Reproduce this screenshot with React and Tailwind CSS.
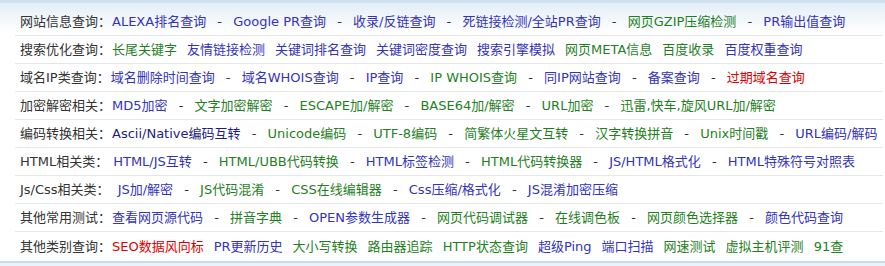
import React from "react";

const B = "text-[#3333bb]";
const G = "text-[#1f7f1f]";
const R = "text-[#dd0000]";
const N = "text-[#1c1c86]";

const rows = [
  {
    label: "网站信息查询：",
    dash: true,
    items: [
      ["ALEXA排名查询", B],
      ["Google PR查询", B],
      ["收录/反链查询", B],
      ["死链接检测/全站PR查询", B],
      ["网页GZIP压缩检测", G],
      ["PR输出值查询", B],
    ],
  },
  {
    label: "搜索优化查询：",
    dash: false,
    items: [
      ["长尾关键字", G],
      ["友情链接检测", B],
      ["关键词排名查询", B],
      ["关键词密度查询", B],
      ["搜索引擎模拟", B],
      ["网页META信息", G],
      ["百度收录", G],
      ["百度权重查询", B],
    ],
  },
  {
    label: "域名IP类查询：",
    dash: true,
    items: [
      ["域名删除时间查询", B],
      ["域名WHOIS查询", B],
      ["IP查询", B],
      ["IP WHOIS查询", G],
      ["同IP网站查询", B],
      ["备案查询", B],
      ["过期域名查询", R],
    ],
  },
  {
    label: "加密解密相关：",
    dash: true,
    items: [
      ["MD5加密", B],
      ["文字加密解密", G],
      ["ESCAPE加/解密", G],
      ["BASE64加/解密", G],
      ["URL加密", G],
      ["迅雷,快车,旋风URL加/解密", G],
    ],
  },
  {
    label: "编码转换相关：",
    dash: true,
    items: [
      ["Ascii/Native编码互转", N],
      ["Unicode编码", G],
      ["UTF-8编码", G],
      ["简繁体火星文互转", G],
      ["汉字转换拼音", G],
      ["Unix时间戳", G],
      ["URL编码/解码", B],
    ],
  },
  {
    label: "HTML相关类：",
    dash: true,
    gap: "mr-[5px]",
    items: [
      ["HTML/JS互转", B],
      ["HTML/UBB代码转换", G],
      ["HTML标签检测", B],
      ["HTML代码转换器", G],
      ["JS/HTML格式化", B],
      ["HTML特殊符号对照表", B],
    ],
  },
  {
    label: "Js/Css相关类：",
    dash: true,
    gap: "mr-[8px]",
    items: [
      ["JS加/解密", B],
      ["JS代码混淆", G],
      ["CSS在线编辑器", G],
      ["Css压缩/格式化", B],
      ["JS混淆加密压缩", B],
    ],
  },
  {
    label: "其他常用测试：",
    dash: true,
    items: [
      ["查看网页源代码", B],
      ["拼音字典", G],
      ["OPEN参数生成器", B],
      ["网页代码调试器", G],
      ["在线调色板", G],
      ["网页颜色选择器", G],
      ["颜色代码查询", B],
    ],
  },
  {
    label: "其他类别查询：",
    dash: false,
    last: true,
    items: [
      ["SEO数据风向标", R],
      ["PR更新历史", B],
      ["大小写转换", G],
      ["路由器追踪", G],
      ["HTTP状态查询", G],
      ["超级Ping", B],
      ["端口扫描", B],
      ["网速测试", G],
      ["虚拟主机评测", G],
      ["91查", G],
    ],
  },
];

function Row({ row }) {
  return (
    <div
      className={
        "flex h-[28px] items-center whitespace-nowrap pl-[5px] " +
        (row.last ? "" : "border-b border-[#e3e7eb]")
      }
    >
      <span className={"text-[#333333] " + (row.gap || "mr-[1px]")}>
        {row.label}
      </span>
      {row.items.map(([text, color], i) => (
        <React.Fragment key={i}>
          {i > 0 &&
            (row.dash ? (
              <span className="w-[27px] text-center text-[#333333]">-</span>
            ) : (
              <span className="w-[10px]" />
            ))}
          <a className={"cursor-pointer " + color}>{text}</a>
        </React.Fragment>
      ))}
    </div>
  );
}

export default function App() {
  return (
    <div
      className="w-[885px] h-[266px] overflow-hidden bg-white text-[13px] leading-[15px]"
      style={{ fontFamily: '"DejaVu Sans", "Noto Sans CJK SC", sans-serif' }}
    >
      <div className="h-[3px] bg-[#cfe1ef]" />
      <div className="bg-[linear-gradient(to_bottom,#e3eef8,#ffffff_30px)] pt-[5px] pb-[1px] pl-[15px] pr-[2px]">
        {rows.map((row, i) => (
          <Row key={i} row={row} />
        ))}
      </div>
      <div className="h-[2px] bg-[#c8dceb]" />
      <div className="h-[10px] bg-[#eaf3fa]" />
    </div>
  );
}
